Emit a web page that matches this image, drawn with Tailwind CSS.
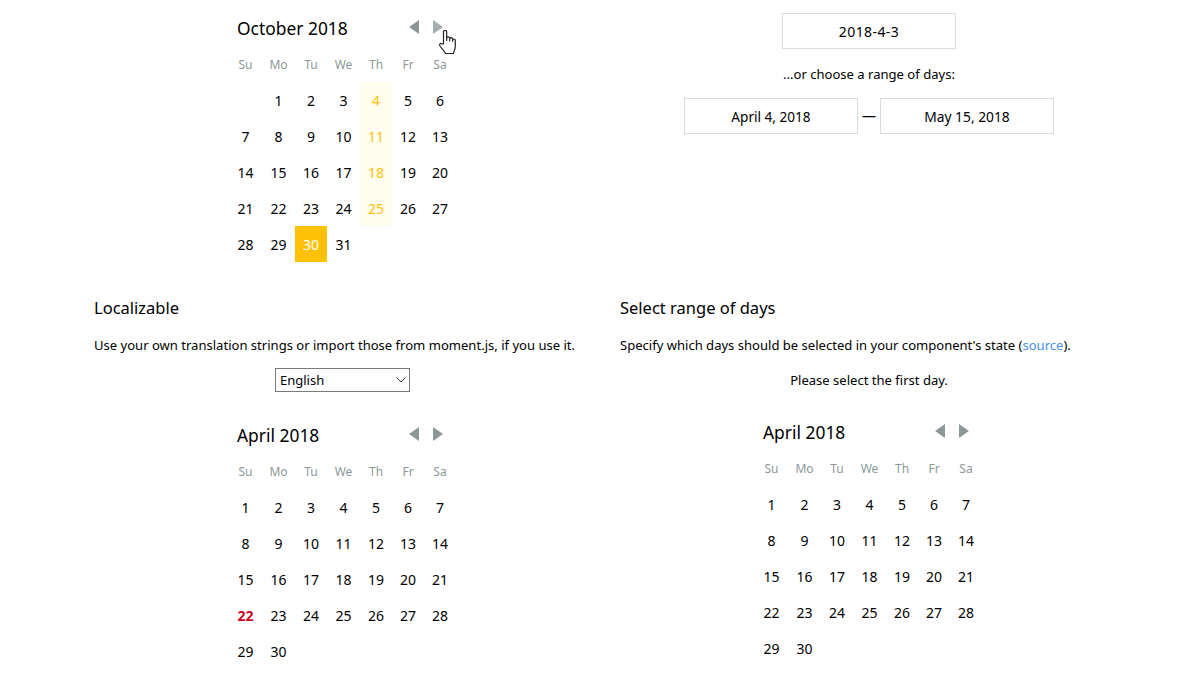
<!DOCTYPE html>
<html lang="en">
<head>
  <meta charset="UTF-8">
  <meta name="viewport" content="width=device-width, initial-scale=1.0">
  <title>Day picker examples</title>
  <script src="https://cdn.jsdelivr.net/npm/@tailwindcss/browser@4"></script>
</head>
<body class="relative h-[680px] overflow-hidden bg-white font-['Noto_Sans','Open_Sans',sans-serif] text-[13.05px] text-black">
  <div class="grid grid-cols-[496px_496px] gap-x-[30px] pl-[94px]">

    <!-- top left: calendar with highlighted thursdays -->
    <div class="h-[296px]">
      <div class="ml-[135px] w-[227px]">
        <div class="relative h-[47px] pl-2 pt-[15px] text-[17.4px] leading-[27px]">
          October 2018
          <div class="absolute right-[13px] top-5 flex gap-[14px]">
            <svg width="10" height="14" viewBox="0 0 10 14"><path d="M10 0V14L0 7z" fill="#8b9898"/></svg>
            <svg width="10" height="14" viewBox="0 0 10 14"><path d="M0 0V14L10 7z" fill="#a3aeae"/></svg>
          </div>
        </div>
        <div class="grid grid-cols-[33px_33px_32px_33px_32px_32px_32px] text-xs text-[#8b9898] *:flex *:h-[35px] *:items-center *:justify-center *:pt-[1px]">
          <div>Su</div><div>Mo</div><div>Tu</div><div>We</div><div>Th</div><div>Fr</div><div>Sa</div>
        </div>
        <div class="grid grid-cols-[33px_33px_32px_33px_32px_32px_32px] auto-rows-[36px] text-sm *:flex *:items-center *:justify-center *:pt-[2px]">
          <div></div><div>1</div><div>2</div><div>3</div><div class="bg-[#fffdf0] text-[#ffc107]">4</div><div>5</div><div>6</div>
          <div>7</div><div>8</div><div>9</div><div>10</div><div class="bg-[#fffdf0] text-[#ffc107]">11</div><div>12</div><div>13</div>
          <div>14</div><div>15</div><div>16</div><div>17</div><div class="bg-[#fffdf0] text-[#ffc107]">18</div><div>19</div><div>20</div>
          <div>21</div><div>22</div><div>23</div><div>24</div><div class="bg-[#fffdf0] text-[#ffc107]">25</div><div>26</div><div>27</div>
          <div>28</div><div>29</div><div class="bg-[#ffc107] text-white">30</div><div>31</div>
        </div>
      </div>
    </div>

    <!-- top right: inputs -->
    <div class="flex h-[296px] flex-col items-center pl-[2px] pt-[13px] text-sm">
      <div class="flex h-9 w-[174px] items-center justify-center border border-[#dcdcdc] pt-[2px] tracking-[0.4px]">2018-4-3</div>
      <p class="mt-[15px] text-[13.05px] leading-[20px]">...or choose a range of days:</p>
      <div class="mt-[14px] flex items-center">
        <div class="flex h-9 w-[174px] items-center justify-center border border-[#dcdcdc] pt-[2px] text-[13.6px]">April 4, 2018</div>
        <span class="w-[22px] text-center">—</span>
        <div class="flex h-9 w-[174px] items-center justify-center border border-[#dcdcdc] pt-[2px] text-[13.8px]">May 15, 2018</div>
      </div>
    </div>

    <!-- localizable -->
    <div>
      <h2 class="text-[16.5px] leading-[24px]">Localizable</h2>
      <p class="mt-[15px] leading-[20px]">Use your own translation strings or import those from moment.js, if you use it.</p>
      <div class="relative ml-[181px] mt-[13px] h-6 w-[135px] border border-[#7a7a7a] pl-1 text-[13px] leading-[23px]">
        English
        <svg class="absolute right-[3px] top-[8px]" width="10" height="6" viewBox="0 0 10 6" fill="none" stroke="#444"><path d="M.5.5 5 5 9.500.5"/></svg>
      </div>
      <div class="ml-[135px] mt-[15px] w-[227px]">
        <div class="relative h-[47px] pl-2 pt-[15px] text-[17.4px] leading-[27px]">
          April 2018
          <div class="absolute right-[13px] top-5 flex gap-[14px]">
            <svg width="10" height="14" viewBox="0 0 10 14"><path d="M10 0V14L0 7z" fill="#8b9898"/></svg>
            <svg width="10" height="14" viewBox="0 0 10 14"><path d="M0 0V14L10 7z" fill="#8b9898"/></svg>
          </div>
        </div>
        <div class="grid grid-cols-[33px_33px_32px_33px_32px_32px_32px] text-xs text-[#8b9898] *:flex *:h-[35px] *:items-center *:justify-center *:pt-[1px]">
          <div>Su</div><div>Mo</div><div>Tu</div><div>We</div><div>Th</div><div>Fr</div><div>Sa</div>
        </div>
        <div class="grid grid-cols-[33px_33px_32px_33px_32px_32px_32px] auto-rows-[36px] text-sm *:flex *:items-center *:justify-center *:pt-[2px]">
          <div>1</div><div>2</div><div>3</div><div>4</div><div>5</div><div>6</div><div>7</div>
          <div>8</div><div>9</div><div>10</div><div>11</div><div>12</div><div>13</div><div>14</div>
          <div>15</div><div>16</div><div>17</div><div>18</div><div>19</div><div>20</div><div>21</div>
          <div class="font-bold text-[#d0021b]">22</div><div>23</div><div>24</div><div>25</div><div>26</div><div>27</div><div>28</div>
          <div>29</div><div>30</div>
        </div>
      </div>
    </div>

    <!-- select range -->
    <div>
      <h2 class="text-[16.5px] leading-[24px]">Select range of days</h2>
      <p class="mt-[15px] leading-[20px]">Specify which days should be selected in your component's state (<a href="#" class="text-[#4a90e2]">source</a>).</p>
      <p class="mt-[15px] pl-[2px] text-center leading-[20px]">Please select the first day.</p>
      <div class="ml-[135px] mt-[14px] w-[227px]">
        <div class="relative h-[47px] pl-2 pt-[15px] text-[17.4px] leading-[27px]">
          April 2018
          <div class="absolute right-[13px] top-5 flex gap-[14px]">
            <svg width="10" height="14" viewBox="0 0 10 14"><path d="M10 0V14L0 7z" fill="#8b9898"/></svg>
            <svg width="10" height="14" viewBox="0 0 10 14"><path d="M0 0V14L10 7z" fill="#8b9898"/></svg>
          </div>
        </div>
        <div class="grid grid-cols-[33px_33px_32px_33px_32px_32px_32px] text-xs text-[#8b9898] *:flex *:h-[35px] *:items-center *:justify-center *:pt-[1px]">
          <div>Su</div><div>Mo</div><div>Tu</div><div>We</div><div>Th</div><div>Fr</div><div>Sa</div>
        </div>
        <div class="grid grid-cols-[33px_33px_32px_33px_32px_32px_32px] auto-rows-[36px] text-sm *:flex *:items-center *:justify-center *:pt-[2px]">
          <div>1</div><div>2</div><div>3</div><div>4</div><div>5</div><div>6</div><div>7</div>
          <div>8</div><div>9</div><div>10</div><div>11</div><div>12</div><div>13</div><div>14</div>
          <div>15</div><div>16</div><div>17</div><div>18</div><div>19</div><div>20</div><div>21</div>
          <div>22</div><div>23</div><div>24</div><div>25</div><div>26</div><div>27</div><div>28</div>
          <div>29</div><div>30</div>
        </div>
      </div>
    </div>
  </div>

  <!-- mouse cursor from the capture -->
  <svg class="absolute left-[438px] top-[30px]" width="18" height="25" viewBox="0 0 18 25" fill="#fff" stroke="#222" stroke-width="1.2" stroke-linejoin="round">
    <path d="M5.500 14V2a1.600 1.600 0 0 1 3.200 0v8.500V8.300a1.500 1.500 0 0 1 3 0v2.500V9.200a1.500 1.500 0 0 1 3 0v2v-.9a1.300 1.300 0 0 1 2.600 0v6.200c0 3.500-1.300 4.500-2 7h-7.800c-1-2.500-3.500-4.500-5.500-7.500-1.200-1.900.6-3.200 2-2z"/>
  </svg>
</body>
</html>
